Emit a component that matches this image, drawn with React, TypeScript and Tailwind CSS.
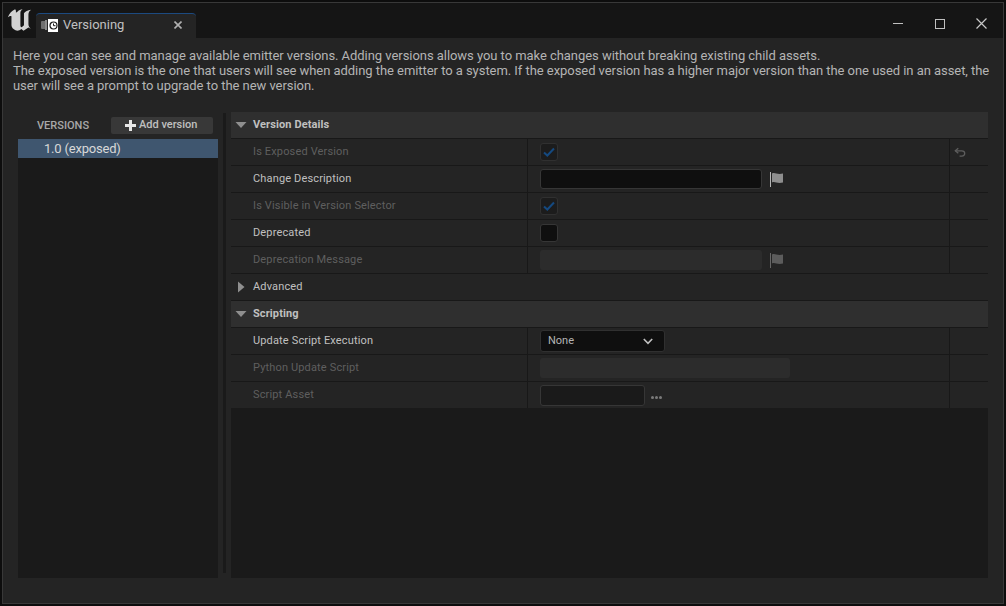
const font = "font-['Roboto',sans-serif]";

function Arrow({ open }: { open: boolean }) {
  if (open) {
    return (
      <svg width="12" height="8" viewBox="0 0 12 8" className="ml-[4px]">
        <path d="M0.5 1 H11.5 L6 7 Z" fill="#8f8f8f" />
      </svg>
    );
  }
  return (
    <svg width="8" height="12" viewBox="0 0 8 12" className="ml-[6px]">
      <path d="M1 0.5 L7.5 6 L1 11.5 Z" fill="#8f8f8f" />
    </svg>
  );
}

function Section({ label, open = true }: { label: string; open?: boolean }) {
  return (
    <div className="flex h-[27px] shrink-0 items-center border-b border-[#181818] bg-[#2f2f2f]">
      <div className="flex w-[22px] items-center">
        <Arrow open={open} />
      </div>
      <span className="text-[11px] font-bold tracking-[0.1px] text-[#c0c0c0]">{label}</span>
    </div>
  );
}

function Flag({ dim }: { dim?: boolean }) {
  const c = dim ? "#5c5c5c" : "#8e8e8e";
  return (
    <svg width="14" height="15" viewBox="0 0 14 15" className="ml-[8px]">
      <rect x="0" y="0" width="1" height="15" fill={dim ? "#666666" : "#b5b5b5"} />
      <path d="M2 1.5 C5 0 7 3 13 1.5 V10.5 C7 12 5 9 2 10.5 Z" fill={c} />
    </svg>
  );
}

function Check() {
  return (
    <div className="flex h-[18px] w-[18px] items-center justify-center rounded-[3px] border border-[#303030] bg-[#1c1c1c]">
      <svg width="12" height="10" viewBox="0 0 12 10">
        <path d="M1 5.5 L4.3 8.5 L11 1.5" fill="none" stroke="#15497f" strokeWidth="2" />
      </svg>
    </div>
  );
}

function Row({
  label,
  dim,
  reset,
  last,
  children,
}: {
  label: string;
  dim?: boolean;
  reset?: boolean;
  last?: boolean;
  children?: React.ReactNode;
}) {
  return (
    <div className={`flex shrink-0 bg-[#242424] ${last ? "h-[26px]" : "h-[27px] border-b border-[#181818]"}`}>
      <div className={`w-[297px] border-r border-[#181818] pl-[22px] text-[11px] leading-[26px] tracking-[0.15px] ${dim ? "text-[#5f5f5f]" : "text-[#c0c0c0]"}`}>
        {label}
      </div>
      <div className="flex w-[422px] items-center border-r border-[#181818] pl-[12px]">{children}</div>
      <div className="flex flex-1 items-center pl-[4px]">
        {reset && (
          <svg width="12" height="11" viewBox="0 0 14 12" fill="none" stroke="#5e5e5e" strokeWidth="1.5">
            <path d="M5 1 L1.5 4 L5 7" />
            <path d="M1.5 4 H9 C11.5 4 12.5 5.5 12.5 7 C12.5 9 11 10.3 9 10.3 H6.5" />
          </svg>
        )}
      </div>
    </div>
  );
}

function UeLogo() {
  return (
    <svg width="25" height="24" viewBox="0 0 28 26" fill="#d2d2d2">
      <path d="M9 1 C5 3 2.5 6 1 10 C3 8.5 4.5 8 5 9 V19 C5 21.5 7 23.5 9.5 24.5 C11.5 25.3 14 25 16 23 L18.5 25 L24 21.5 L27 23 C25 21.5 24 20 24 17.5 V7 C24 4.5 25 3 27 1.5 C23 2 20.5 3.5 19 5.5 V19 L16.5 21 C15.5 21 15 20.5 15 19 V5 C15 3 16 2 17.5 1 C15 1.3 13.5 2 12 3.5 L10 5 V3 C10 2 9.5 1.5 9 1 Z" />
    </svg>
  );
}

function TabIcon() {
  return (
    <div className="flex items-center">
      <div className="h-[8px] w-[4px] rounded-l-[1px] bg-[#6e6e6e]" />
      <div className="mr-[1px] h-[10px] w-[2px] bg-[#8a8a8a]" />
      <div className="flex h-[13px] w-[10px] items-center justify-center bg-white">
        <svg width="9" height="9" viewBox="0 0 9 9" fill="none" stroke="#1a1a1a" strokeWidth="1.2">
          <circle cx="4.5" cy="4.5" r="3.5" />
          <path d="M4.5 2.5 V4.7 H6.5" strokeWidth="1" />
        </svg>
      </div>
    </div>
  );
}

export default function App() {
  return (
    <div className={`${font} h-[606px] w-[1006px] overflow-hidden bg-[#0d0d0d] p-[2px]`}>
      <div className="flex h-full flex-col border border-[#383838] bg-[#242424]">
        {/* title bar */}
        <div className="flex h-[35px] shrink-0 items-end bg-[#151515]">
          <div className="mb-[6px] ml-[4px] w-[29px]">
            <UeLogo />
          </div>
          <div className="flex h-[25px] w-[160px] items-center rounded-t-[4px] border-t border-[#1c4a80] bg-[#242424] pb-[2px] pl-[5px]">
            <TabIcon />
            <span className="ml-[5px] text-[13px] text-[#c0c0c0]">Versioning</span>
            <svg width="8" height="8" viewBox="0 0 8 8" stroke="#b0b0b0" strokeWidth="1.6" className="ml-[50px]">
              <path d="M0.5 0.5 L7.5 7.5 M7.5 0.5 L0.5 7.5" />
            </svg>
          </div>
          <div className="flex-1" />
          <div className="mb-[9px] flex items-center">
            <div className="h-[1px] w-[10px] bg-[#c0c0c0]" />
            <div className="ml-[32px] h-[10px] w-[10px] border border-[#c0c0c0]" />
            <svg width="11" height="11" viewBox="0 0 11 11" stroke="#c8c8c8" strokeWidth="1.2" className="mr-[16px] ml-[31px]">
              <path d="M0.5 0.5 L10.5 10.5 M10.5 0.5 L0.5 10.5" />
            </svg>
          </div>
        </div>

        {/* description */}
        <div className="h-[73px] shrink-0 pt-[10px] pl-[10px] text-[13px] leading-[15px] tracking-[-0.05px] text-[#b4b4b4]">
          <p>Here you can see and manage available emitter versions. Adding versions allows you to make changes without breaking existing child assets.</p>
          <p className="w-[985px]">The exposed version is the one that users will see when adding the emitter to a system. If the exposed version has a higher major version than the one used in an asset, the user will see a prompt to upgrade to the new version.</p>
        </div>

        <div className="flex h-[467px] shrink-0 pl-[15px]">
          {/* versions list */}
          <div className="flex w-[200px] flex-col bg-[#1a1a1a]">
            <div className="flex h-[28px] shrink-0 items-center bg-[#242424] pl-[19px]">
              <span className="w-[74px] pt-[2px] text-[11px] font-medium text-[#a8a8a8]">VERSIONS</span>
              <div className="mt-[1px] flex h-[17px] w-[102px] items-center rounded-[2px] bg-[#383838] pl-[14px]">
                <svg width="11" height="11" viewBox="0 0 11 11" fill="#e8e8e8">
                  <path d="M4 0 H7 V4 H11 V7 H7 V11 H4 V7 H0 V4 H4 Z" />
                </svg>
                <span className="ml-[3px] pb-[1px] text-[11px] font-medium text-[#c0c0c0]">Add version</span>
              </div>
            </div>
            <div className="h-[19px] shrink-0 bg-[#3f566f] pl-[26px] text-[13px] leading-[20px] tracking-[-0.2px] text-[#d8d8d8]">1.0 (exposed)</div>
          </div>

          {/* splitter */}
          <div className="mx-[5px] mt-[2px] mb-[5px] w-[3px] bg-[#1a1a1a]" />

          {/* details */}
          <div className="mt-[1px] flex w-[757px] flex-col bg-[#1a1a1a]">
            <Section label="Version Details" />
            <Row label="Is Exposed Version" dim reset>
              <Check />
            </Row>
            <Row label="Change Description">
              <div className="h-[20px] w-[222px] rounded-[3px] border border-[#363636] bg-[#0f0f0f]" />
              <Flag />
            </Row>
            <Row label="Is Visible in Version Selector" dim>
              <Check />
            </Row>
            <Row label="Deprecated">
              <div className="h-[18px] w-[18px] rounded-[3px] border border-[#363636] bg-[#0f0f0f]" />
            </Row>
            <Row label="Deprecation Message" dim>
              <div className="h-[20px] w-[222px] rounded-[3px] bg-[#2c2c2c]" />
              <Flag dim />
            </Row>
            <div className="flex h-[27px] shrink-0 items-center border-b border-[#181818] bg-[#242424]">
              <div className="flex w-[22px] items-center">
                <Arrow open={false} />
              </div>
              <span className="text-[11px] tracking-[0.15px] text-[#c0c0c0]">Advanced</span>
            </div>
            <Section label="Scripting" />
            <Row label="Update Script Execution">
              <div className="flex h-[22px] w-[125px] items-center justify-between rounded-[3px] border border-[#303030] bg-[#0f0f0f] pr-[11px] pl-[7px] text-[11px] text-[#b4b4b4]">
                <span>None</span>
                <svg width="10" height="7" viewBox="0 0 10 7" fill="none" stroke="#c0c0c0" strokeWidth="1.6">
                  <path d="M0.8 1 L5 5.3 L9.2 1" />
                </svg>
              </div>
            </Row>
            <Row label="Python Update Script" dim>
              <div className="h-[20px] w-[250px] rounded-[3px] bg-[#2c2c2c]" />
            </Row>
            <Row label="Script Asset" dim last>
              <div className="h-[21px] w-[105px] rounded-[3px] border border-[#363636] bg-[#1a1a1a]" />
              <div className="mt-[4px] ml-[6px] flex gap-[1px]">
                <div className="h-[3px] w-[3px] rounded-full bg-[#7a7a7a]" />
                <div className="h-[3px] w-[3px] rounded-full bg-[#7a7a7a]" />
                <div className="h-[3px] w-[3px] rounded-full bg-[#7a7a7a]" />
              </div>
            </Row>
          </div>
        </div>
      </div>
    </div>
  );
}
